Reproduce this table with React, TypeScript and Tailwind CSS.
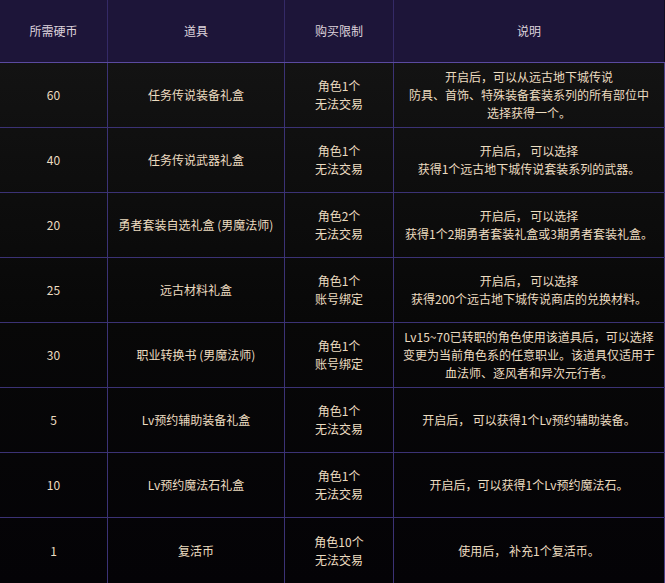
import React from "react";

type Row = { coin: string; item: string; limit: string[]; desc: string[] };

const rows: Row[] = [
  {
    coin: "60",
    item: "任务传说装备礼盒",
    limit: ["角色1个", "无法交易"],
    desc: ["开启后，可以从远古地下城传说", "防具、首饰、特殊装备套装系列的所有部位中", "选择获得一个。"],
  },
  {
    coin: "40",
    item: "任务传说武器礼盒",
    limit: ["角色1个", "无法交易"],
    desc: ["开启后， 可以选择", "获得1个远古地下城传说套装系列的武器。"],
  },
  {
    coin: "20",
    item: "勇者套装自选礼盒 (男魔法师)",
    limit: ["角色2个", "无法交易"],
    desc: ["开启后， 可以选择", "获得1个2期勇者套装礼盒或3期勇者套装礼盒。"],
  },
  {
    coin: "25",
    item: "远古材料礼盒",
    limit: ["角色1个", "账号绑定"],
    desc: ["开启后， 可以选择", "获得200个远古地下城传说商店的兑换材料。"],
  },
  {
    coin: "30",
    item: "职业转换书 (男魔法师)",
    limit: ["角色1个", "账号绑定"],
    desc: ["Lv15~70已转职的角色使用该道具后，可以选择", "变更为当前角色系的任意职业。该道具仅适用于", "血法师、逐风者和异次元行者。"],
  },
  {
    coin: "5",
    item: "Lv预约辅助装备礼盒",
    limit: ["角色1个", "无法交易"],
    desc: ["开启后， 可以获得1个Lv预约辅助装备。"],
  },
  {
    coin: "10",
    item: "Lv预约魔法石礼盒",
    limit: ["角色1个", "无法交易"],
    desc: ["开启后，可以获得1个Lv预约魔法石。"],
  },
  {
    coin: "1",
    item: "复活币",
    limit: ["角色10个", "无法交易"],
    desc: ["使用后， 补充1个复活币。"],
  },
];

const cell = "flex flex-col items-center justify-center text-center border-r border-[#3b3275]";

export default function App() {
  return (
    <div
      className="w-[665px] h-[583px] overflow-hidden bg-black text-[12px] leading-[18px] text-[#ecdcc0]"
      style={{ fontFamily: '"Noto Sans CJK SC", "Noto Sans", sans-serif' }}
    >
      <div className="grid grid-cols-[108px_177px_109px_271px] h-[63px] bg-[#1d1539] border-b border-[#5a4aa0] text-[#ddd3dc]">
        <div className={cell + " border-[#342a66]"}>所需硬币</div>
        <div className={cell + " border-[#342a66]"}>道具</div>
        <div className={cell + " border-[#342a66]"}>购买限制</div>
        <div className={cell + " border-[#120c24]"}>说明</div>
      </div>
      <div className="bg-gradient-to-b from-[#131313] via-[#080808] to-[#040306]">
        {rows.map((r, i) => (
          <div
            key={i}
            className={
              "grid grid-cols-[108px_177px_109px_271px] h-[65px] " +
              (i < rows.length - 1 ? "border-b border-[#3b3275]" : "")
            }
          >
            <div className={cell}>{r.coin}</div>
            <div className={cell}>{r.item}</div>
            <div className={cell}>
              {r.limit.map((l, j) => (
                <div key={j}>{l}</div>
              ))}
            </div>
            <div className={cell + " border-[#4a3f86]"}>
              {r.desc.map((d, j) => (
                <div key={j} className="whitespace-pre">{d}</div>
              ))}
            </div>
          </div>
        ))}
      </div>
    </div>
  );
}
